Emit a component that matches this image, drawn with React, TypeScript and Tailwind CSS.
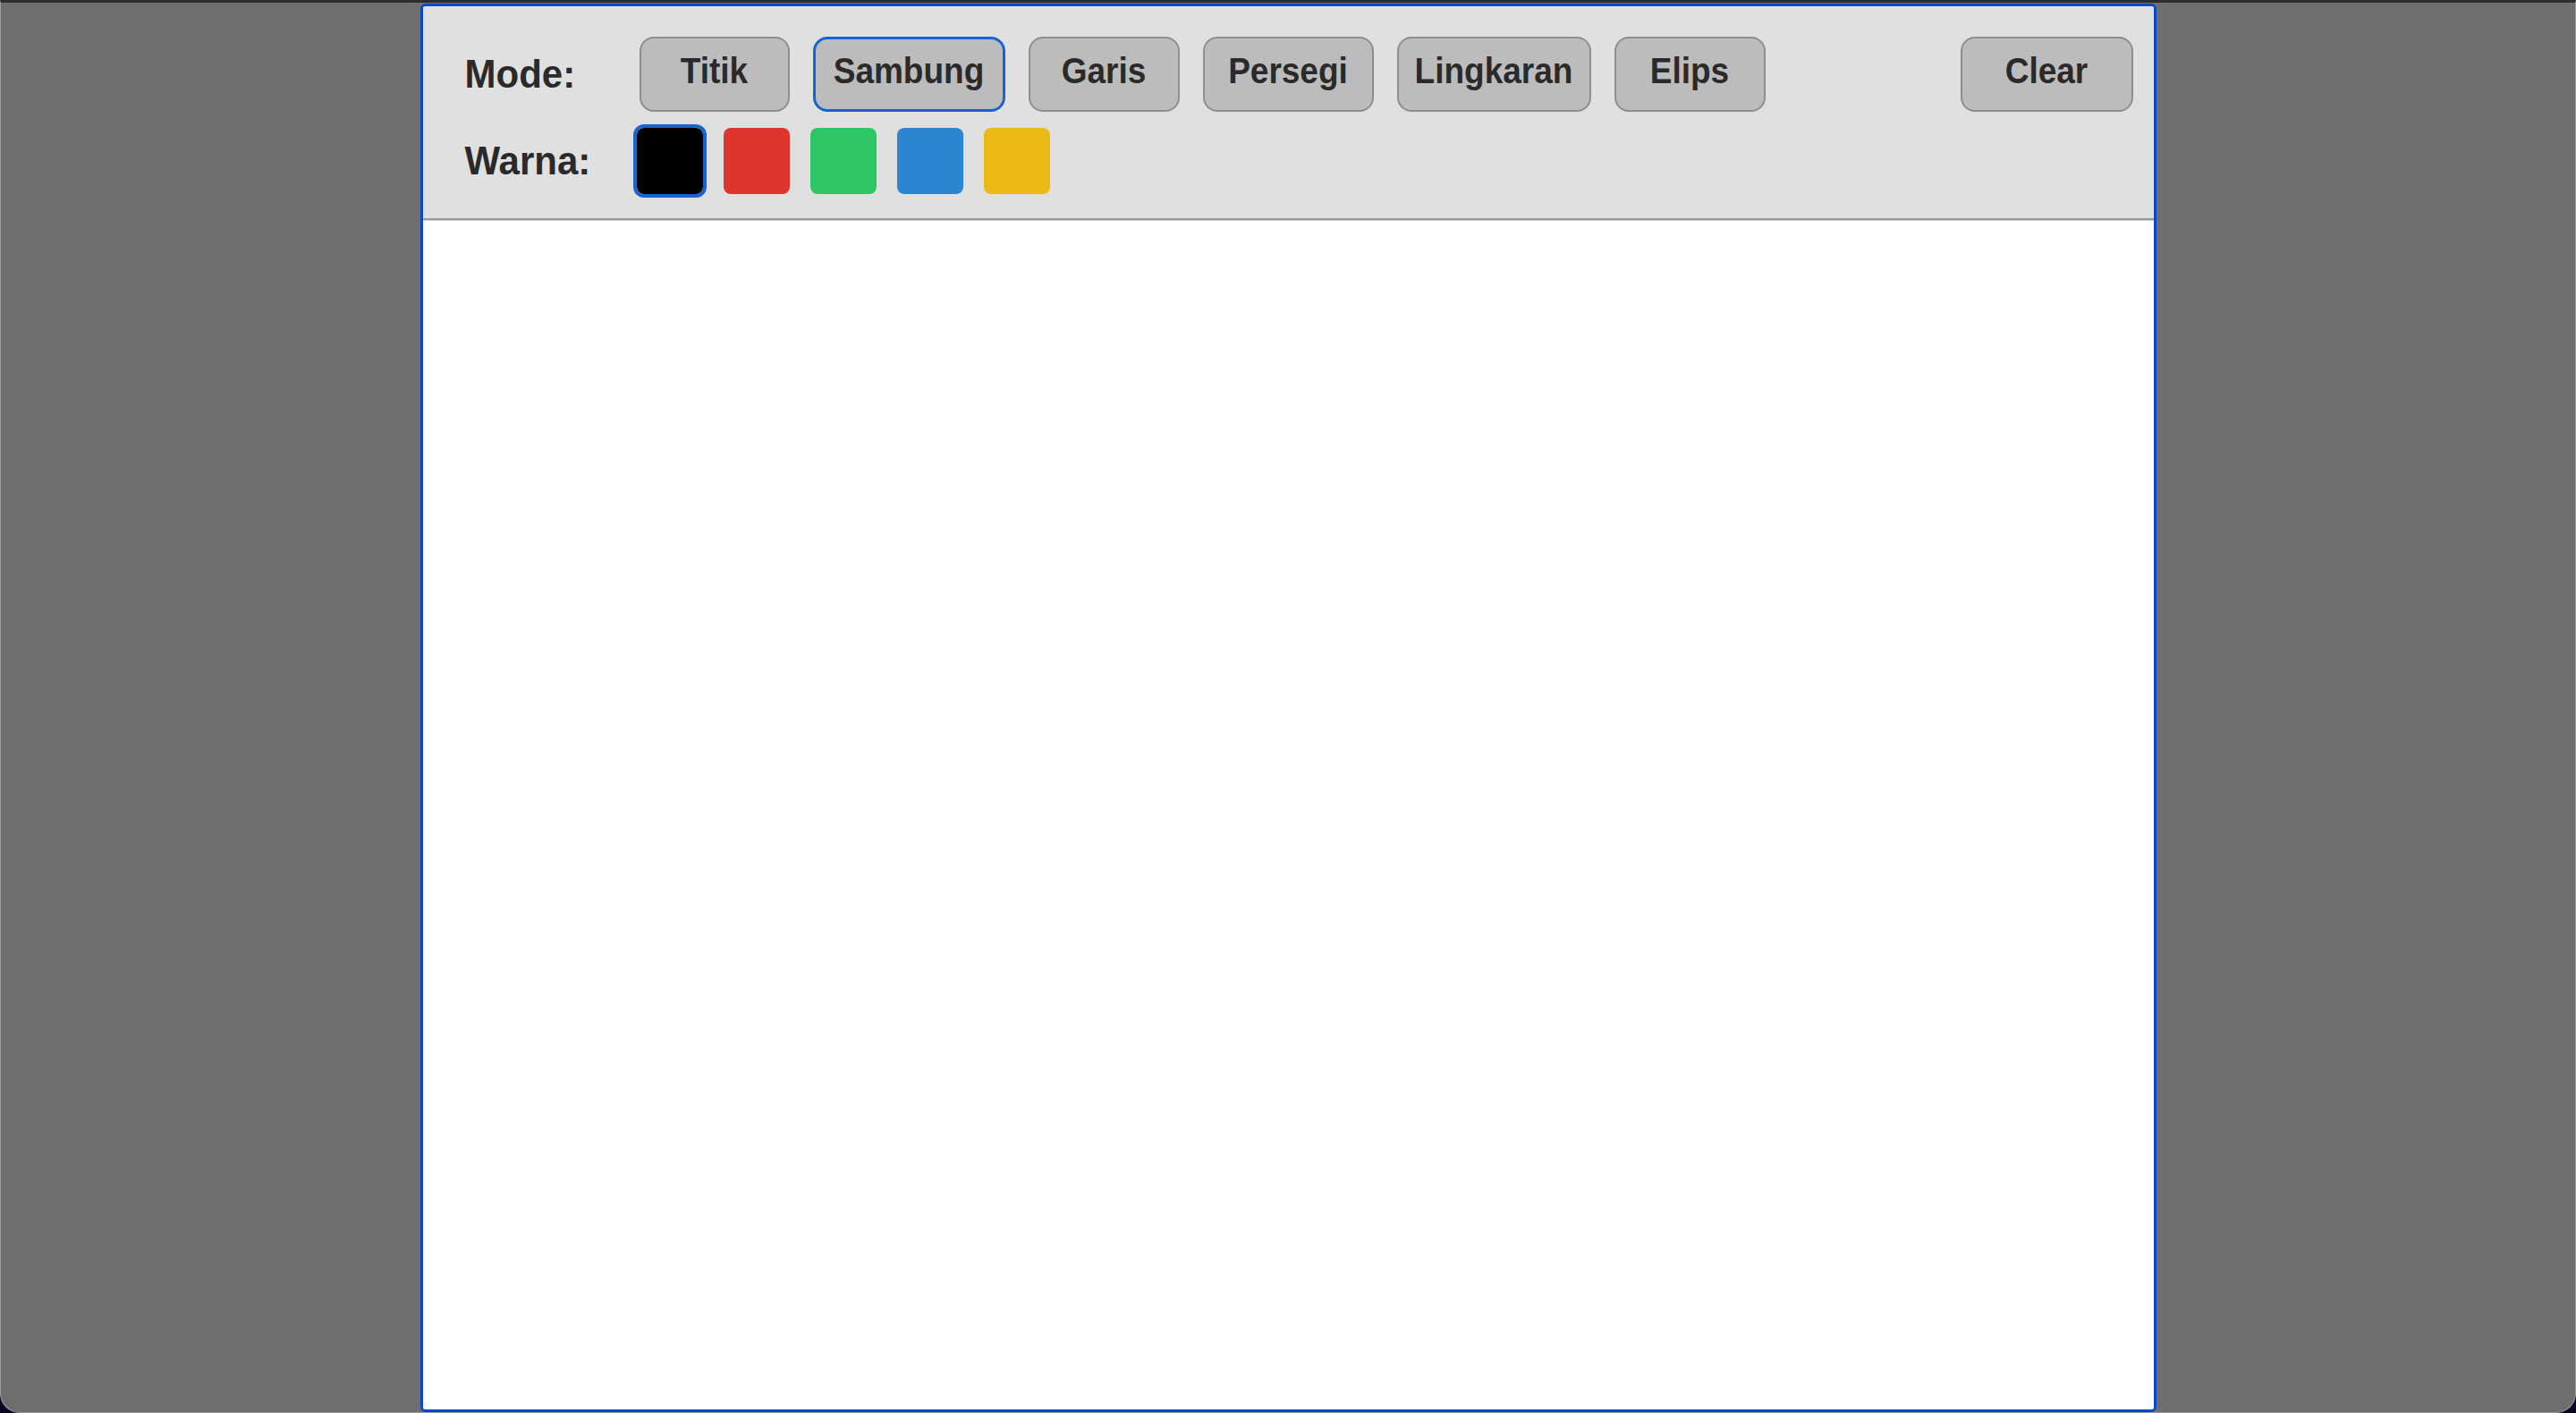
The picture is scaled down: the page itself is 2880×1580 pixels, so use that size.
import React from "react";

const modes = [
  { label: "Titik", width: "w-[168px]" },
  { label: "Sambung", width: "w-[215px]", active: true },
  { label: "Garis", width: "w-[169px]" },
  { label: "Persegi", width: "w-[191px]" },
  { label: "Lingkaran", width: "w-[217px]" },
  { label: "Elips", width: "w-[169px]" },
];

const colors = [
  { name: "hitam", bg: "bg-[#000000]", active: true },
  { name: "merah", bg: "bg-[#e0342f]" },
  { name: "hijau", bg: "bg-[#2ec662]" },
  { name: "biru", bg: "bg-[#2b85d3]" },
  { name: "kuning", bg: "bg-[#ecb813]" },
];

function ToolButton({
  label,
  width,
  active,
}: {
  label: string;
  width: string;
  active?: boolean;
}) {
  return (
    <button
      className={`${width} flex h-[84px] items-center justify-center rounded-[16px] bg-[#bcbcbc] pb-[7px] text-[37px] font-bold leading-none text-[#2a2a2a] ${
        active ? "border-[3px] border-[#1763d2]" : "border-2 border-[#8e8e8e]"
      }`}
    >
      <span className="inline-block scale-y-[1.08]">{label}</span>
    </button>
  );
}

export default function App() {
  return (
    <div className="h-[1580px] w-full overflow-hidden bg-[#0a0620] font-['Liberation_Sans',Arial,sans-serif]">
      <div className="flex h-full flex-col rounded-b-[22px] border-x border-b border-t-[3px] border-[#9c9c9c] border-t-[#2c2c2c] bg-[#6e6e6e]">
        <div className="mx-auto mt-px flex w-[1945px] flex-1 flex-col px-[2px]">
          <div className="flex flex-1 flex-col overflow-hidden rounded-[6px] border-[3px] border-[#0b47c9] bg-white">
            {/* toolbar */}
            <div className="border-b-2 border-[#9a9a9a] bg-[#e0e0e0] pb-[27px] pl-[47px] pr-[23px] pt-[34px]">
              <div className="flex h-[84px] items-center">
                <span className="inline-block w-[195px] origin-left scale-y-[1.06] text-[42px] font-bold leading-none text-[#2a2a2a]">
                  Mode:
                </span>
                <div className="flex gap-[26px]">
                  {modes.map((m) => (
                    <ToolButton key={m.label} {...m} />
                  ))}
                </div>
                <div className="ml-auto">
                  <ToolButton label="Clear" width="w-[193px]" />
                </div>
              </div>
              <div className="mt-[18px] flex h-[74px] items-center">
                <span className="inline-block w-[192px] origin-left scale-y-[1.06] text-[42px] font-bold leading-none text-[#2a2a2a]">
                  Warna:
                </span>
                <div className="flex gap-[23px]">
                  {colors.map((c) => (
                    <div
                      key={c.name}
                      className={`h-[74px] w-[74px] rounded-[8px] ${c.bg} ${
                        c.active ? "outline-[4px] outline-solid outline-[#1763d2]" : ""
                      }`}
                    />
                  ))}
                </div>
              </div>
            </div>
            {/* canvas */}
            <div className="flex-1 border-t border-[#d2d2d2] bg-white" />
          </div>
        </div>
      </div>
    </div>
  );
}
